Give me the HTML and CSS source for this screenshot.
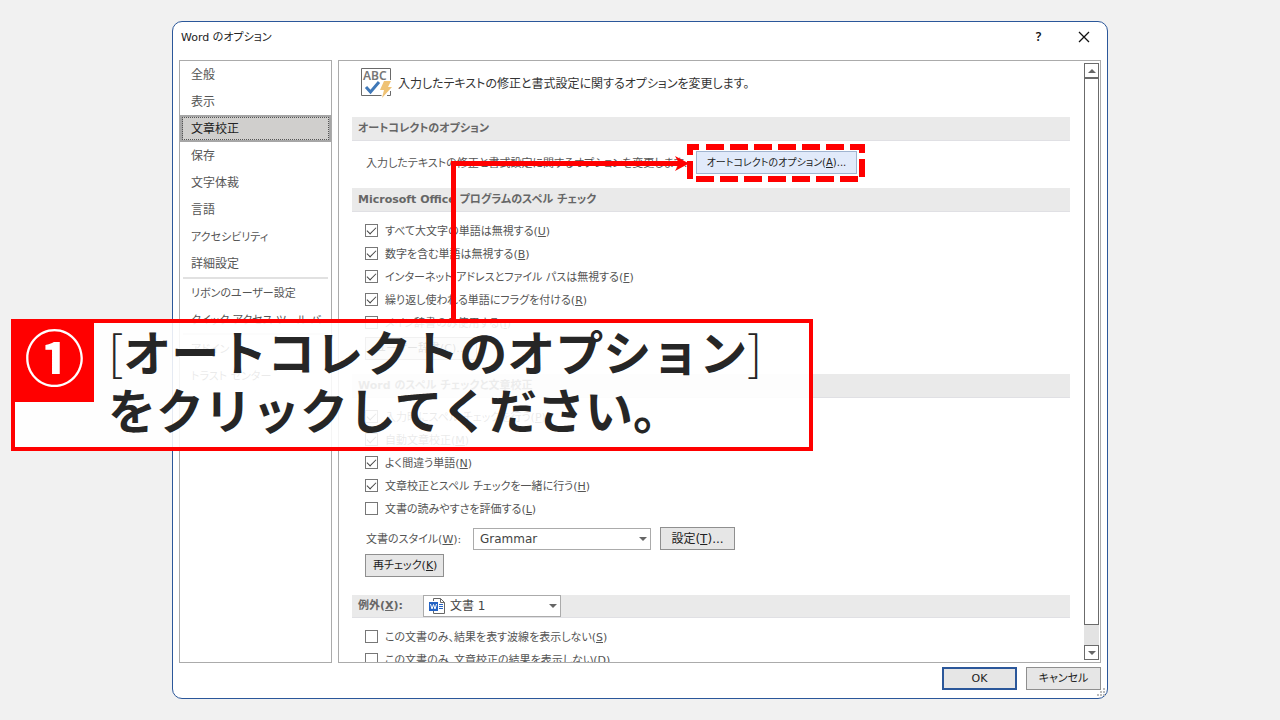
FILE: index.html
```html
<!DOCTYPE html>
<html lang="ja">
<head>
<meta charset="utf-8">
<title>Word のオプション</title>
<link rel="stylesheet" href="styles.css">
</head>
<body>
<main class="dialog">
  <header class="titlebar">
    <h1 class="title">Word のオプション</h1>
    <button class="title-btn help" type="button">?</button>
    <button class="title-btn" type="button" aria-label="閉じる"><svg width="12" height="12" viewBox="0 0 12 12"><path d="M1 1l10 10M11 1L1 11" stroke="#111" stroke-width="1.3" fill="none"/></svg></button>
  </header>

  <div class="body">
    <nav class="side">
      <a class="item" href="#">全般</a>
      <a class="item" href="#">表示</a>
      <a class="item selected" href="#">文章校正</a>
      <a class="item" href="#">保存</a>
      <a class="item" href="#">文字体裁</a>
      <a class="item" href="#">言語</a>
      <a class="item kana" href="#">アクセシビリティ</a>
      <a class="item" href="#">詳細設定</a>
      <hr class="rule">
      <a class="item kana" href="#">リボンのユーザー設定</a>
      <a class="item kana" href="#">クイック アクセス ツール バー</a>
      <hr class="rule">
      <a class="item kana" href="#">アドイン</a>
      <a class="item kana" href="#">トラスト センター</a>
    </nav>

    <section class="panel">
      <div class="content">
        <div class="intro">
          <svg width="31" height="31" viewBox="0 0 31 31">
            <path d="M29.500 12V.5H.5v27h20M26 27.500h3.500V23" fill="none" stroke="#6a6a6a"/>
            <text class="abc" x="2" y="12">ABC</text>
            <path d="M5 19l4.500 5L18 14" fill="none" stroke="#3f78b8" stroke-width="3"/>
            <path d="M23 13h7l-3 6h4l-10 11 2-8h-4z" fill="#efc274"/>
          </svg>
          <p>入力したテキストの修正と書式設定に関するオプションを変更します。</p>
        </div>

        <h2 class="bar">オートコレクトのオプション</h2>
        <div class="auto">
          <span class="auto-text">入力したテキストの修正と書式設定に関するオプションを変更します:</span>
          <button class="btn hot" type="button">オートコレクトのオプション(<u>A</u>)...</button>
        </div>

        <h2 class="bar">Microsoft Office プログラムのスペル チェック</h2>
        <div class="group">
          <label class="check"><input type="checkbox" checked><span>すべて大文字の単語は無視する(<u>U</u>)</span></label>
          <label class="check"><input type="checkbox" checked><span>数字を含む単語は無視する(<u>B</u>)</span></label>
          <label class="check"><input type="checkbox" checked><span>インターネット アドレスとファイル パスは無視する(<u>F</u>)</span></label>
          <label class="check"><input type="checkbox" checked><span>繰り返し使われる単語にフラグを付ける(<u>R</u>)</span></label>
          <label class="check"><input type="checkbox"><span>メイン辞書のみ使用する(<u>I</u>)</span></label>
          <button class="btn dict" type="button">ユーザー辞書(<u>C</u>)...</button>
        </div>

        <h2 class="bar">Word のスペル チェックと文章校正</h2>
        <div class="group">
          <label class="check"><input type="checkbox" checked><span>入力時にスペル チェックを行う(<u>P</u>)</span></label>
          <label class="check"><input type="checkbox" checked><span>自動文章校正(<u>M</u>)</span></label>
          <label class="check"><input type="checkbox" checked><span>よく間違う単語(<u>N</u>)</span></label>
          <label class="check"><input type="checkbox" checked><span>文章校正とスペル チェックを一緒に行う(<u>H</u>)</span></label>
          <label class="check"><input type="checkbox"><span>文書の読みやすさを評価する(<u>L</u>)</span></label>
          <div class="style-row">
            <label class="style-label" for="style">文書のスタイル(<u>W</u>):</label>
            <span class="pick wide">
              <select id="style"><option>Grammar</option></select>
              <svg class="arrow" width="8" height="4" viewBox="0 0 8 4"><path d="M0 0h8L4 4z" fill="#666"/></svg>
            </span>
            <button class="btn settings" type="button">設定(<u>T</u>)...</button>
          </div>
          <button class="btn recheck" type="button">再チェック(<u>K</u>)</button>
        </div>

        <div class="bar except">
          <label class="except-label" for="doc">例外(<u>X</u>):</label>
          <span class="pick doc">
            <select id="doc"><option>文書 1</option></select>
            <svg class="word" width="16" height="16" viewBox="0 0 16 16">
              <path d="M4.500 3V.5h7l4 4v11h-11V13M11.500.5v4h4" fill="#fff" stroke="#666"/>
              <path d="M10 6.500h4M10 8.500h4M10 10.500h4" stroke="#2463c4"/>
              <path d="M0 4h9v9H0z" fill="#2463c4"/>
              <path d="M1.500 6l1.500 5 1.500-4.500L6 11l1.500-5" fill="none" stroke="#fff"/>
            </svg>
            <svg class="arrow" width="8" height="4" viewBox="0 0 8 4"><path d="M0 0h8L4 4z" fill="#666"/></svg>
          </span>
        </div>
        <div class="group">
          <label class="check"><input type="checkbox"><span>この文書のみ、結果を表す波線を表示しない(<u>S</u>)</span></label>
          <label class="check"><input type="checkbox"><span>この文書のみ、文章校正の結果を表示しない(<u>D</u>)</span></label>
        </div>
      </div>

      <div class="scroll">
        <button class="scroll-btn" type="button" aria-label="上へ"><svg width="8" height="4" viewBox="0 0 8 4"><path d="M0 4h8L4 0z" fill="#666"/></svg></button>
        <div class="thumb"></div>
        <div class="track"></div>
        <button class="scroll-btn" type="button" aria-label="下へ"><svg width="8" height="4" viewBox="0 0 8 4"><path d="M0 0h8L4 4z" fill="#666"/></svg></button>
      </div>
    </section>
  </div>

  <footer class="foot">
    <button class="btn ok" type="button">OK</button>
    <button class="btn" type="button">キャンセル</button>
  </footer>
  <svg class="grip" width="8" height="8" viewBox="0 0 8 8"><path d="M6 0h2v2H6zM3 3h2v2H3zM6 3h2v2H6zM0 6h2v2H0zM3 6h2v2H3zM6 6h2v2H6z" fill="#bbb"/></svg>
</main>

<aside class="callout">
  <span class="badge">①</span>
  <p class="message"><span class="thin">[</span>オートコレクトのオプション<span class="thin">]</span><br>をクリックしてください。</p>
</aside>

<svg class="marks" width="1280" height="720" viewBox="0 0 1280 720">
  <path d="M453.500 323V163.500H680" fill="none" stroke="#f00" stroke-width="5"/>
  <path d="M675 156l14 7.500-14 7.500 4-7.500z" fill="#f00"/>
  <path d="M687 147h12M706 147h18M730 147h18M754 147h18M778 147h18M802 147h18M826 147h18M850 147h15M696 179h18M720 179h18M744 179h18M768 179h18M792 179h18M816 179h18M840 179h18M690 144v11M690 161v18M862 144v9M862 159v18" fill="none" stroke="#f00" stroke-width="6"/>
</svg>
</body>
</html>
```
FILE: styles.css
```css
* { box-sizing: border-box; }
body {
  margin: 0;
  height: 100vh;
  padding: 21px 172px;
  background: #f1f1f1;
  color: #555;
  font: 11px/18px "DejaVu Sans", "Noto Sans CJK JP", sans-serif;
  font-feature-settings: "palt";
  overflow: hidden;
}
h1, h2, p { margin: 0; font: inherit; }
button, select, input { font: inherit; color: inherit; margin: 0; font-feature-settings: inherit; }
svg { display: block; }

.dialog {
  position: relative;
  display: flex;
  flex-direction: column;
  height: 100%;
  padding: 0 6px 8px;
  background: #fff;
  border: 1px solid #2b579a;
  border-radius: 10px;
}
.titlebar { display: flex; align-items: center; height: 38px; margin-right: -6px; padding: 0 1px 8px 2px; }
.title { flex: 1; padding-top: 2px; color: #222; }
.title-btn { display: grid; place-items: center; width: 45px; padding: 0; border: 0; background: none; color: #111; }
.help { font: 600 12px/18px "Noto Sans", sans-serif; }
.body { display: flex; flex: 1; gap: 6px; min-height: 0; }

.side { width: 153px; border: 1px solid #ababab; }
.item {
  display: flex;
  align-items: center;
  height: 27px;
  padding: 0 11px;
  color: #555;
  font-size: 12px;
  text-decoration: none;
  white-space: nowrap;
}
.kana { padding-top: 2px; font-size: 11px; }
.selected {
  padding: 0 8px;
  color: #222;
  background: #d0cfcd;
  border: 2px solid #a6a6a6;
  border-left-width: 3px;
  outline: 1px dotted #555;
  outline-offset: -3px;
}
.rule { height: 2px; margin: 0 3px; border: 0; background: #e1e1e1; }

.panel { display: flex; flex: 1; min-width: 0; border: 1px solid #ababab; padding-right: 1px; }
.content { flex: 1; min-width: 0; padding: 0 14px 0 13px; overflow: hidden; }
.intro { display: flex; align-items: center; gap: 6px; height: 56px; padding: 0 0 12px 9px; color: #333; font-size: 12px; }
.intro p { padding-top: 2px; }
.intro svg { margin-top: 1px; }
.abc { font: 600 12px "Noto Sans", sans-serif; fill: #777; }
.bar {
  display: flex;
  align-items: center;
  height: 24px;
  background: #eaeaea;
  padding: 0 6px;
  border-bottom: 1px solid #e0e0e4;
  color: #666;
  font-weight: 600;
}
.auto { display: flex; align-items: center; height: 47px; padding: 0 14px 4px; }
.auto-text { width: 330px; padding-top: 2px; white-space: nowrap; }
.group { padding: 7px 13px 14px; }
.check { display: flex; align-items: center; gap: 7px; height: 23px; white-space: nowrap; }
.check span { padding-top: 2px; }
.check input {
  appearance: none;
  display: grid;
  place-items: center;
  width: 13px;
  height: 13px;
  border: 1px solid #777;
  background: #fff;
}
.check input:checked::before {
  content: "";
  width: 4px;
  height: 8px;
  margin-bottom: 2px;
  border: solid #444;
  border-width: 0 1px 1px 0;
  transform: rotate(45deg);
}
.btn {
  height: 23px;
  min-width: 75px;
  padding: 0 7px;
  border: 1px solid #8f8f8f;
  background: #e6e6e6;
  color: #222;
  line-height: 18px;
  white-space: nowrap;
}
.hot { width: 161px; border-color: #a0b4d0; background: #e1eafa; font-size: 10px; }
.dict { display: block; width: 112px; margin-top: 3px; }
.style-row { display: flex; align-items: center; height: 23px; margin: 7px 0 4px; }
.style-label { width: 108px; padding: 2px 0 0 1px; }
.pick { position: relative; height: 22px; }
.pick select {
  appearance: none;
  width: 100%;
  height: 100%;
  padding: 0 6px;
  border: 1px solid #ababab;
  border-radius: 0;
  background: #fff;
  color: #444;
  font-size: 12px;
}
.arrow { position: absolute; right: 4px; top: 9px; }
.wide { width: 178px; }
.settings { margin-left: 9px; font-size: 12px; }
.recheck { display: block; width: 79px; margin-bottom: 4px; }
.except { height: 23px; }
.except-label { width: 65px; }
.doc { width: 138px; font-weight: 400; }
.doc select { padding-left: 26px; }
.word { position: absolute; left: 6px; top: 3px; }

.scroll { display: flex; flex-direction: column; width: 15px; margin: 2px 0; background: #e3e3e3; }
.scroll-btn { display: grid; place-items: center; height: 15px; padding: 0; border: 1px solid #6b6b6b; background: #fff; }
.thumb { flex: 547; border: 1px solid #6b6b6b; background: #fff; }
.track { flex: 20; }

.foot { display: flex; justify-content: flex-end; gap: 9px; padding-top: 4px; }
.ok { border: 2px solid #2b579a; }
.grip { position: absolute; right: 2px; bottom: 2px; }

.callout {
  position: absolute;
  left: 11px;
  top: 319px;
  width: 802px;
  display: flex;
  align-items: flex-start;
  height: 132px;
  border: 4px solid #f00;
  background: rgba(255, 255, 255, .88);
  color: #262626;
  font-family: "Noto Sans CJK JP", sans-serif;
  font-feature-settings: normal;
}
.badge {
  width: 79px;
  height: 79px;
  background: #f00;
  color: #fff;
  font-size: 60px;
  line-height: 64px;
  font-weight: 700;
  text-align: center;
}
.message { margin-top: -2px; padding-left: 14px; font-size: 48px; line-height: 58px; font-weight: 700; white-space: nowrap; }
.thin { font-weight: 300; }
.marks { position: absolute; left: 0; top: 0; pointer-events: none; }
```
